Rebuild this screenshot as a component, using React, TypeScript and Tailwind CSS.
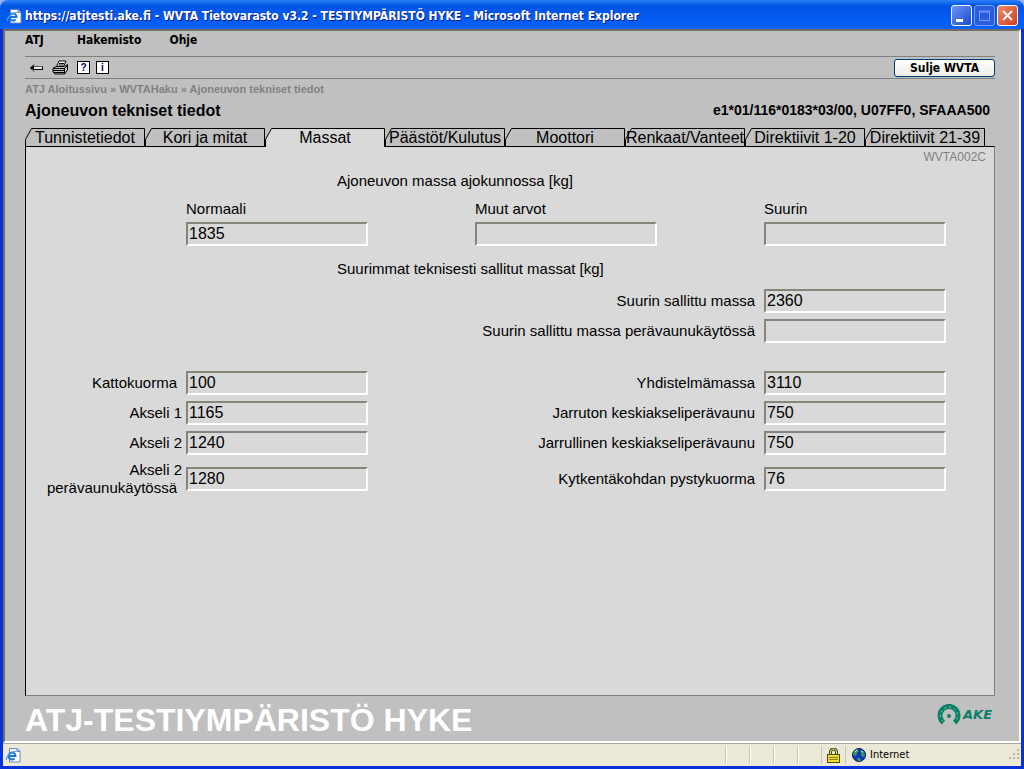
import React from "react";

const TABS = [
  "Tunnistetiedot",
  "Kori ja mitat",
  "Massat",
  "Päästöt/Kulutus",
  "Moottori",
  "Renkaat/Vanteet",
  "Direktiivit 1-20",
  "Direktiivit 21-39",
];

const GRID = "grid grid-cols-[160fr_182fr_107fr_182fr_107fr_182fr_48fr]";

const INPUT =
  "block h-6 w-full min-w-0 border-2 border-t-[#85857c] border-l-[#85857c] border-r-white border-b-white bg-[#d9d9d9] px-px text-base leading-5 text-black outline-none";

function PageIcon() {
  return (
    <svg width="16" height="16" viewBox="0 0 16 16">
      <path d="M4.500 1.500h7.500l3 3v10.500H4.500z" fill="#fff" stroke="#6c86bc" />
      <path d="M12 1.500v3h3z" fill="#c8d8f4" stroke="#6c86bc" />
      <path d="M3.500 9h7a3.500 3.500 0 1 0-1 2.500" fill="none" stroke="#1c74d8" strokeWidth="2" />
      <path d="M1.500 13c-1-2 3-8 10-9" fill="none" stroke="#3ba2f0" strokeWidth="1.200" />
    </svg>
  );
}

function BackIcon() {
  return (
    <svg width="15" height="10" viewBox="0 0 15 10">
      <path d="M1 5l4-4v3h9v2H5v3z" fill="#e8e8e8" />
      <path d="M5 1.500L1.500 5L5 8.500M5 6.500h9M13.500 4v3" fill="none" stroke="#000" />
      <path d="M4 3.500h10" stroke="#555" />
      <path d="M1 5l4-3v5z" fill="#000" />
    </svg>
  );
}

function PrinterIcon() {
  return (
    <svg width="17" height="16" viewBox="0 0 17 16">
      <path d="M4.500 6.500l2.500-5.500h7l-2.500 5.500z" fill="#fff" stroke="#000" />
      <path d="M7 3.500h5M6.500 5h5" stroke="#000" />
      <path d="M1 8.500l3-2h8.500l3-2v5.500l-3 4H3l-2-2z" fill="#c0c0c0" stroke="#000" />
      <path d="M1 8.500h11.500l3-3M1 10.500h12M2 12.500h11M12.500 8v6" fill="none" stroke="#000" />
    </svg>
  );
}

function LockIcon() {
  return (
    <svg width="13" height="15" viewBox="0 0 13 15">
      <path d="M3.500 7V4a3 3 0 0 1 6 0v3" fill="none" stroke="#4a4a10" strokeWidth="3" />
      <path d="M3.500 7V4a3 3 0 0 1 6 0v3" fill="none" stroke="#e0dc90" />
      <rect x=".5" y="6.500" width="12" height="8" fill="#f0e030" stroke="#4a4a10" />
      <path d="M2 9.500h9M2 11.500h9" stroke="#8a8210" />
    </svg>
  );
}

function GlobeIcon() {
  return (
    <svg width="14" height="14" viewBox="0 0 14 14">
      <circle cx="7" cy="7" r="6.500" fill="#1238c0" stroke="#0a1a50" />
      <path d="M2 3l3-2 2 2-2 2-1 3-3-1zM9 2l3 2 1 4-3 1-1-3zM5 10l3 0 1 3H6z" fill="#35a050" />
      <path d="M3 4l2-2M9 3l2 1" stroke="#b8f0c0" />
    </svg>
  );
}

function AkeLogo() {
  return (
    <svg width="58" height="22" viewBox="0 0 58 22" role="img" aria-label="AKE">
      <path d="M6.500 18.500A9 9 0 1 1 17.500 18.500" fill="none" stroke="#0a8068" strokeWidth="5" />
      <path d="M6 17.500A8.500 8.500 0 1 1 18 17.500" fill="none" stroke="#9dc4b8" strokeDasharray="2 3" />
      <circle cx="12" cy="12" r="2" fill="#0a8068" />
      <text x="26" y="15" fontSize="13" fontWeight="700" fontStyle="italic" fill="#0a8068" fontFamily="DejaVu Sans, sans-serif">
        AKE
      </text>
    </svg>
  );
}

function Tab({ label, active }: { label: string; active: boolean }) {
  return (
    <button type="button" role="tab" aria-selected={active} className="relative h-[19px] min-w-0 flex-1 text-base leading-[19px]">
      <svg className="absolute inset-0 h-full w-full" viewBox="0 0 120 19" preserveAspectRatio="none">
        <path d="M.5 19V11.500L6.500 .5H119.500V19" fill={active ? "#d9d9d9" : "#c0c0c0"} stroke="#000" />
        {!active && <path d="M0 18.500H120" stroke="#000" />}
      </svg>
      <span className="relative block text-center whitespace-nowrap">{label}</span>
    </button>
  );
}

type FieldProps = {
  id: string;
  label: React.ReactNode;
  value: string;
  labelClass: string;
  inputClass: string;
};

function Field({ id, label, value, labelClass, inputClass }: FieldProps) {
  return (
    <>
      <label htmlFor={id} className={`text-right whitespace-nowrap ${labelClass}`}>
        {label}
      </label>
      <div className={inputClass}>
        <input id={id} className={INPUT} defaultValue={value} readOnly />
      </div>
    </>
  );
}

const LEFT_WIDE = { labelClass: "col-start-1 pr-[9px]", inputClass: "col-start-2" };
const LEFT = { labelClass: "col-start-1 pr-1", inputClass: "col-start-2" };
const RIGHT = { labelClass: "col-start-3 col-span-3 pr-[9px]", inputClass: "col-start-6" };

export default function App() {
  return (
    <div className="flex min-h-screen flex-col bg-[#0831d9] font-['Liberation_Sans',Arial,sans-serif] text-black">
      {/* Title bar */}
      <div className="bg-[#9ab0f0]">
        <header className="flex h-[29px] items-center rounded-t-lg bg-linear-to-b from-[#2a80f8] via-[#0054e3] via-20% to-[#0a62ff] px-1.5 pt-0.5">
          <PageIcon />
          <h1 className="ml-[3px] flex-1 font-['DejaVu_Sans_Condensed','DejaVu_Sans',sans-serif] text-[12px] font-bold whitespace-nowrap text-white [text-shadow:1px_1px_#0a1883]">
            https://atjtesti.ake.fi - WVTA Tietovarasto v3.2 - TESTIYMPÄRISTÖ HYKE - Microsoft Internet Explorer
          </h1>
          <div className="flex gap-0.5">
            <button aria-label="Minimize" className="h-[21px] w-[21px] rounded-[3px] border border-white bg-linear-to-br from-[#6a94f4] to-[#1c48d0]">
              <svg width="19" height="19"><path d="M4 13h7v3H4z" fill="#fff" /></svg>
            </button>
            <button aria-label="Maximize" className="h-[21px] w-[21px] rounded-[3px] border border-[#7a9cf0] bg-[#2a5ce0]">
              <svg width="19" height="19"><path d="M4.500 5h10v9.500h-10zM4 6h11" fill="none" stroke="#7a9cf0" /></svg>
            </button>
            <button aria-label="Close" className="h-[21px] w-[21px] rounded-[3px] border border-white bg-linear-to-br from-[#f08868] to-[#d03c14]">
              <svg width="19" height="19"><path d="M5 5l9 9M14 5l-9 9" stroke="#fff" strokeWidth="2" /></svg>
            </button>
          </div>
        </header>
      </div>

      <div className="mx-[3px] mb-[3px] flex flex-1 flex-col bg-[#ece9d8]">
        <main className="flex flex-1 flex-col border-2 border-t-[#716f64] border-r-white border-b-white border-l-[#716f64] bg-[#c0c0c0] pr-6 pl-5">
          <nav className="flex h-[25px] items-start gap-7 font-['DejaVu_Sans_Condensed','DejaVu_Sans',sans-serif] text-[12px] leading-[18px] font-bold">
            <button className="min-w-6 text-left">ATJ</button>
            <button>Hakemisto</button>
            <button>Ohje</button>
          </nav>

          <div className="flex h-[23px] items-center border-y border-[#808080] pl-1">
            <button aria-label="Takaisin"><BackIcon /></button>
            <button aria-label="Tulosta" className="ml-2"><PrinterIcon /></button>
            <button className="ml-2 h-[13px] w-[13px] border border-black bg-white text-[10px] leading-[11px] font-bold text-[#000060]">?</button>
            <button className="ml-1.5 h-[13px] w-[13px] border border-black bg-white text-[10px] leading-[11px] font-bold text-[#000060]">i</button>
            <button className="ml-auto h-[18px] w-[101px] rounded-[3px] border border-[#003c74] bg-linear-to-b from-white to-[#ecebe5] font-['DejaVu_Sans_Condensed','DejaVu_Sans',sans-serif] text-[12px] leading-4 font-bold">
              Sulje WVTA
            </button>
          </div>

          <div className="text-[11px] leading-5 font-bold text-[#808080]">
            <a href="#atj">ATJ Aloitussivu</a> » <a href="#haku">WVTAHaku</a> » <a href="#tiedot">Ajoneuvon tekniset tiedot</a>
          </div>

          <div className="flex h-[29px] items-start justify-between pr-[5px] font-bold">
            <h2 className="text-base leading-6">Ajoneuvon tekniset tiedot</h2>
            <span className="text-sm leading-[22px]">e1*01/116*0183*03/00, U07FF0, SFAAA500</span>
          </div>

          <div role="tablist" className="relative z-10 -mb-px flex pr-2.5">
            {TABS.map((tab) => (
              <Tab key={tab} label={tab} active={tab === "Massat"} />
            ))}
          </div>

          <section className="flex-1 border border-[#808080] border-t-black border-l-black bg-[#d9d9d9] pt-px text-[15px] leading-[18px]">
            <p className="pr-2 text-right text-[12px] leading-[18px] text-[#808080]">WVTA002C</p>

            <div className={`${GRID} mt-1.5`}>
              <h3 className="col-span-5 col-start-2 pl-[151px]">Ajoneuvon massa ajokunnossa [kg]</h3>
            </div>
            <div className={`${GRID} mt-2.5 gap-y-1`}>
              <label htmlFor="normaali" className="col-start-2">Normaali</label>
              <label htmlFor="muut" className="col-start-4">Muut arvot</label>
              <label htmlFor="suurin" className="col-start-6">Suurin</label>
              <div className="col-start-2"><input id="normaali" className={INPUT} defaultValue="1835" readOnly /></div>
              <div className="col-start-4"><input id="muut" className={INPUT} readOnly /></div>
              <div className="col-start-6"><input id="suurin" className={INPUT} readOnly /></div>
            </div>

            <div className={`${GRID} mt-3.5`}>
              <h3 className="col-span-5 col-start-2 pl-[151px]">Suurimmat teknisesti sallitut massat [kg]</h3>
            </div>
            <div className={`${GRID} mt-[11px] items-center gap-y-1.5`}>
              <Field id="sallittu" label="Suurin sallittu massa" value="2360" {...RIGHT} />
              <Field id="sallittu-pv" label="Suurin sallittu massa perävaunukäytössä" value="" {...RIGHT} />
            </div>

            <div className={`${GRID} mt-7 items-center gap-y-1.5`}>
              <Field id="katto" label="Kattokuorma" value="100" {...LEFT_WIDE} />
              <Field id="yhdistelma" label="Yhdistelmämassa" value="3110" {...RIGHT} />
              <Field id="akseli1" label="Akseli 1" value="1165" {...LEFT} />
              <Field id="jarruton" label="Jarruton keskiakseliperävaunu" value="750" {...RIGHT} />
              <Field id="akseli2" label="Akseli 2" value="1240" {...LEFT} />
              <Field id="jarrullinen" label="Jarrullinen keskiakseliperävaunu" value="750" {...RIGHT} />
              <Field
                id="akseli2-pv"
                label={
                  <>
                    <span className="block">Akseli 2</span>
                    <span className="block pr-[5px]">perävaunukäytössä</span>
                  </>
                }
                value="1280"
                {...LEFT}
              />
              <Field id="kytkenta" label="Kytkentäkohdan pystykuorma" value="76" {...RIGHT} />
            </div>
          </section>

          <div className="flex h-[45px] items-center justify-between">
            <strong className="mt-0.5 text-[32px] leading-9 text-white">ATJ-TESTIYMPÄRISTÖ HYKE</strong>
            <span className="mb-2"><AkeLogo /></span>
          </div>
        </main>

        {/* Status bar */}
        <footer className="flex h-[23px] items-center border-t border-[#aca899] pl-0.5 font-['DejaVu_Sans_Condensed','DejaVu_Sans',sans-serif] text-[11px]">
          <PageIcon />
          <div className="ml-auto flex h-[18px]">
            {[0, 1, 2, 3].map((n) => (
              <span key={n} className="w-6 border-l border-[#c8c4b0] shadow-[inset_1px_0_#fff]" />
            ))}
          </div>
          <span className="flex h-[18px] w-6 items-center justify-center border-l border-[#c8c4b0]"><LockIcon /></span>
          <span className="flex h-[18px] w-[164px] items-center gap-1 border-l border-[#c8c4b0] pl-1.5"><GlobeIcon />Internet</span>
          <svg width="12" height="12" viewBox="0 0 12 12">
            <path d="M8 0h2v2H8zM4 4h2v2H4zM8 4h2v2H8zM0 8h2v2H0zM4 8h2v2H4zM8 8h2v2H8z" fill="#b8b4a0" />
          </svg>
        </footer>
      </div>
    </div>
  );
}
